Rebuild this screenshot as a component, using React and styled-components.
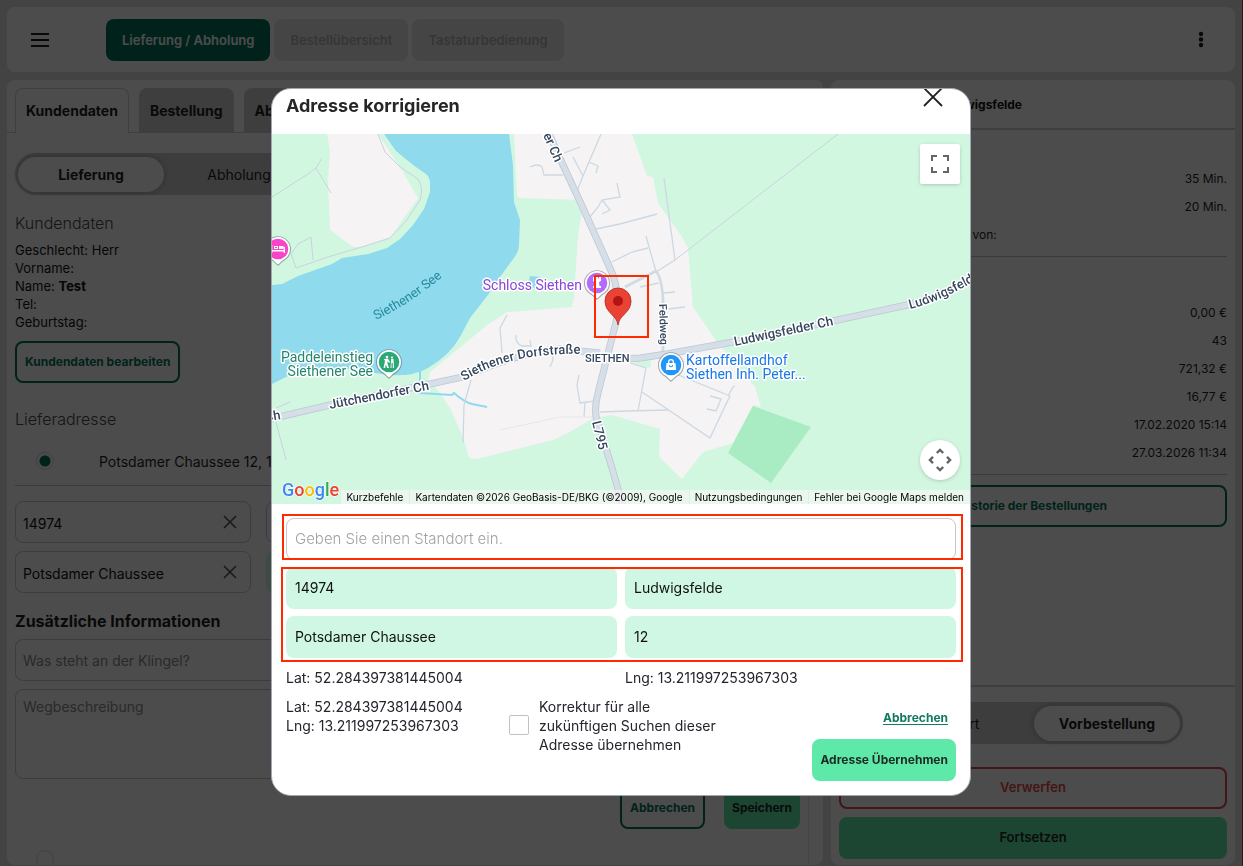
import React from "react";
import styled, { createGlobalStyle, css } from "styled-components";

const GlobalStyle = createGlobalStyle`
  *, *::before, *::after { box-sizing: border-box; }
  body {
    margin: 0;
    background: #dfdfdf;
    font-family: Inter, "Liberation Sans", sans-serif;
    font-size: 14px;
    color: #1f1f1f;
  }
  button, input, textarea { font-family: inherit; }
`;

/* ---------- page frame ---------- */

const Page = styled.div`
  height: 100vh;
  display: flex;
  flex-direction: column;
  gap: 8px;
  padding: 7px 7px 1px;
  border-right: 1px solid #656565;
  overflow: hidden;
`;

const TopBar = styled.header`
  flex: none;
  display: flex;
  align-items: center;
  height: 65px;
  padding: 0 24px;
  background: #fff;
  border-radius: 8px;
`;

const IconButton = styled.button`
  display: flex;
  padding: 0;
  border: 0;
  background: none;
  color: #1f1f1f;
`;

const StepNav = styled.nav`
  display: flex;
  gap: 4px;
  margin-left: 57px;
  flex: 1;
`;

const StepButton = styled.button`
  height: 42px;
  padding: 0 16px;
  border: 0;
  border-radius: 8px;
  font-size: 13px;
  font-weight: 600;
  background: ${(p) => (p.$active ? "#06745c" : "#e8e8e8")};
  color: ${(p) => (p.$active ? "#fff" : "#b4b4b4")};
`;

const Columns = styled.main`
  flex: 1;
  min-height: 0;
  display: grid;
  grid-template-columns: minmax(0, 1fr) 404px;
  gap: 8px;
`;

const Panel = styled.section`
  min-height: 0;
  display: flex;
  flex-direction: column;
  background: #fff;
  border-radius: 8px;
  overflow: hidden;
`;

/* ---------- customer form ---------- */

const TabRow = styled.div`
  flex: none;
  display: flex;
  align-items: flex-end;
  gap: 10px;
  padding: 8px 8px 0;
  height: 53px;
  box-shadow: inset 0 -1px 0 #cfcfcf;
`;

const Tab = styled.button`
  height: 45px;
  padding: 0 10px 2px;
  border: 1px solid ${(p) => (p.$active ? "#cfcfcf" : "#d0d0d0")};
  border-bottom: 0;
  border-radius: 8px 8px 0 0;
  background: ${(p) => (p.$active ? "#fff" : "#d0d0d0")};
  font-size: 14px;
  font-weight: 700;
  color: #1f1f1f;
`;

const FormArea = styled.div`
  flex: 1;
  display: flex;
  flex-direction: column;
  align-items: flex-start;
  margin-right: 14px;
  padding: 20px 8px 0;
  border-right: 1px solid #e4e4e4;
  overflow: hidden;
`;

const Toggle = styled.div`
  flex: none;
  display: flex;
  gap: 2px;
  width: 300px;
  height: 42px;
  padding: 4px 3px 3px;
  border-radius: 21px;
  background: #cccccc;
  ${(p) => p.$centered && css`align-self: center;`}
`;

const ToggleOption = styled.button`
  flex: 1;
  border: 0;
  border-radius: 18px;
  font-size: 14px;
  font-weight: ${(p) => (p.$active ? 700 : 400)};
  color: #1f1f1f;
  background: ${(p) => (p.$active ? "#fff" : "transparent")};
  box-shadow: ${(p) => (p.$active ? "0 0 6px rgba(0, 0, 0, 0.25)" : "none")};
`;

const SectionTitle = styled.h2`
  flex: none;
  margin: ${(p) => p.$top}px 0 0;
  font-size: 16px;
  line-height: 20px;
  font-weight: ${(p) => (p.$bold ? 700 : 300)};
  color: ${(p) => (p.$bold ? "#1f1f1f" : "#4a4a4a")};
`;

const CustomerFacts = styled.div`
  flex: none;
  margin: 8px 0 10px;
  font-size: 13px;
  line-height: 18px;
  color: #111;
`;

const OutlineButton = styled.button`
  flex: none;
  height: 42px;
  padding: 0 8px 2px;
  border: 2px solid ${(p) => (p.$danger ? "#e5484d" : "#06745c")};
  border-radius: 8px;
  background: transparent;
  font-size: ${(p) => (p.$danger ? 13 : 12)}px;
  font-weight: ${(p) => (p.$danger ? 600 : 700)};
  color: ${(p) => (p.$danger ? "#e5484d" : "#06745c")};
`;

const FilledButton = styled.button`
  flex: none;
  height: 42px;
  padding: 0 8px 2px;
  border: 0;
  border-radius: 8px;
  background: #5fe9a9;
  font-size: ${(p) => (p.$wide ? 13 : 12)}px;
  font-weight: ${(p) => (p.$wide ? 600 : 700)};
  color: #1f2a26;
`;

const AddressChoice = styled.label`
  flex: none;
  display: flex;
  align-items: center;
  height: 48px;
  margin-top: 8px;
  padding-left: 21px;
  gap: 45px;
  white-space: nowrap;
  font-size: 14px;
`;

const Radio = styled.input`
  appearance: none;
  flex: none;
  width: 18px;
  height: 18px;
  margin: 0;
  border: 1px solid #d8d8d8;
  border-radius: 50%;
  background: #fff;
  &:checked {
    background: radial-gradient(circle, #06745c 5px, #fff 6px);
  }
`;

const Rule = styled.hr`
  flex: none;
  align-self: stretch;
  height: 1px;
  margin: ${(p) => p.$margin || "0"};
  border: 0;
  background: #c4c4c4;
`;

const FieldGrid = styled.div`
  flex: none;
  align-self: stretch;
  display: grid;
  grid-template-columns: 236px 1fr;
  gap: 8px 15px;
`;

const FieldShell = styled.div`
  display: flex;
  align-items: center;
  height: 42px;
  padding: 0 12px 0 7px;
  border: 1px solid ${(p) => (p.$filled ? "#cff7e3" : "#c8c8c8")};
  border-radius: 8px;
  background: ${(p) => (p.$filled ? "#cff7e3" : "#fff")};
`;

const BareInput = styled.input`
  flex: 1;
  min-width: 0;
  padding: 3px 0 0;
  border: 0;
  background: none;
  font-size: 14px;
  color: #111;
`;

const fieldBox = css`
  flex: none;
  align-self: stretch;
  border: 1px solid #c8c8c8;
  border-radius: 8px;
  background: #fff;
  font-size: 14px;
  color: #111;
  &::placeholder { color: #8e8e8e; opacity: 1; }
`;

const TextField = styled.input`
  ${fieldBox}
  height: 42px;
  margin-top: 8px;
  padding: 0 7px;
`;

const TextArea = styled.textarea`
  ${fieldBox}
  height: 90px;
  margin-top: 8px;
  padding: 8px 7px;
  resize: none;
`;

const FormActions = styled.div`
  flex: none;
  align-self: stretch;
  display: flex;
  justify-content: flex-end;
  gap: 19px;
  margin-top: 8px;
`;

const SpareChoice = styled.label`
  flex: none;
  padding: 21px 0 0 21px;
`;

/* ---------- order summary ---------- */

const SummaryHeader = styled.div`
  flex: none;
  display: flex;
  align-items: center;
  height: 50px;
  padding: 0 8px;
  border-bottom: 2px solid #cfcfcf;
  font-size: 12px;
  font-weight: 700;
  color: #111;
`;

const SummaryHeading = styled.span`
  width: 183px;
  text-align: right;
  white-space: nowrap;
`;

const SummaryBody = styled.div`
  flex: 1;
  display: flex;
  flex-direction: column;
  padding: 35px 8px 0;
`;

const FactList = styled.dl`
  margin: 0;
  font-size: 12px;
  line-height: 28px;
`;

const Fact = styled.div`
  display: flex;
  justify-content: space-between;
  dt, dd { margin: 0; }
`;

const SummaryFooter = styled.div`
  flex: none;
  display: flex;
  flex-direction: column;
  gap: 8px;
  padding: 15px 8px 6px;
  border-top: 2px solid #cfcfcf;
`;

const FooterGap = styled.div`
  height: 7px;
`;

/* ---------- dialog ---------- */

const Overlay = styled.div`
  position: fixed;
  inset: 0;
  display: flex;
  justify-content: center;
  align-items: flex-start;
  padding: 88px 1px 0 0;
  background: rgba(0, 0, 0, 0.7);
`;

const Dialog = styled.div`
  width: 700px;
  max-width: 100%;
  border: 1px solid #a3a5b3;
  border-radius: 20px;
  background: #fff;
  overflow: hidden;
`;

const DialogHeader = styled.header`
  display: flex;
  justify-content: space-between;
  align-items: flex-start;
  height: 45px;
  padding: 0 26px 0 14px;
`;

const DialogTitle = styled.h1`
  margin: 6px 0 0;
  font-size: 18px;
  line-height: 22px;
  font-weight: 700;
  color: #262626;
`;

const MapFrame = styled.div`
  position: relative;
  height: 370px;
  overflow: hidden;
`;

const MapSvg = styled.svg`
  display: block;
  width: 100%;
  height: 100%;
  font-family: Roboto, sans-serif;
`;

const MapControl = styled.button`
  position: absolute;
  right: 10px;
  ${(p) => (p.$bottom ? "bottom: 24px;" : "top: 10px;")}
  display: flex;
  align-items: center;
  justify-content: center;
  width: 40px;
  height: 40px;
  padding: 0;
  border: 0;
  border-radius: ${(p) => (p.$bottom ? "50%" : "2px")};
  background: #fff;
  box-shadow: 0 1px 4px -1px rgba(0, 0, 0, 0.3);
`;

const Attribution = styled.div`
  position: absolute;
  right: 0;
  bottom: 0;
  display: flex;
  gap: 1px;
  white-space: nowrap;
`;

const AttributionItem = styled.a`
  height: 14px;
  padding: 0 6px 0 5px;
  background: rgba(245, 245, 245, 0.7);
  font-size: 10px;
  line-height: 14px;
  color: #000;
  text-decoration: none;
`;

const DialogBody = styled.div`
  padding: 14px;
`;

const Marked = styled.div`
  position: relative;
`;

const RedFrame = styled.div`
  position: absolute;
  inset: ${(p) => p.$inset};
  border: 2px solid #ff2a00;
  pointer-events: none;
`;

const SearchInput = styled.input`
  display: block;
  width: 100%;
  height: 42px;
  padding: 0 8px 2px;
  border: 1px solid #c6c6c6;
  border-radius: 8px;
  font-size: 15px;
  font-weight: 300;
  &::placeholder { color: #a2a2a2; opacity: 1; }
`;

const AddressGrid = styled.div`
  display: grid;
  grid-template-columns: 1fr 1fr;
  gap: 7px 8px;
  margin-top: 7px;
`;

const AddressInput = styled.input`
  min-width: 0;
  height: 42px;
  padding: 0 9px 2px;
  border: 0;
  border-radius: 8px;
  background: #cff7e3;
  font-size: 14px;
  color: #111;
`;

const Coordinates = styled.div`
  display: grid;
  grid-template-columns: 1fr 1fr;
  gap: 8px;
  margin-top: 10px;
  line-height: 19px;
  color: #23252c;
`;

const DialogFooter = styled.footer`
  display: flex;
  align-items: flex-start;
  margin-top: 10px;
  line-height: 19px;
  color: #23252c;
`;

const FooterCoordinates = styled.div`
  width: 223px;
`;

const FutureOption = styled.label`
  display: flex;
  align-items: flex-start;
  gap: 10px;
  width: 214px;
`;

const CheckBox = styled.input`
  appearance: none;
  flex: none;
  width: 20px;
  height: 20px;
  margin: 18px 0 0;
  border: 1px solid #c2c2c2;
  border-radius: 2px;
  background: #fff;
`;

const DialogActions = styled.div`
  display: flex;
  flex-direction: column;
  align-items: flex-end;
  margin-left: auto;
`;

const LinkButton = styled.button`
  height: 42px;
  padding: 0 8px 2px;
  border: 0;
  background: none;
  font-size: 12px;
  font-weight: 700;
  text-decoration: underline;
  text-underline-offset: 2px;
  color: #117a62;
`;

/* ---------- icons ---------- */

const MenuIcon = () => (
  <svg width="18" height="16" viewBox="0 0 18 16" stroke="currentColor" strokeWidth="2" aria-hidden="true">
    <path d="M0 2h18M0 8h18M0 14h18" />
  </svg>
);

const DotsIcon = () => (
  <svg width="20" height="18" viewBox="0 0 20 18" fill="currentColor" aria-hidden="true">
    <circle cx="10" cy="3" r="2.2" />
    <circle cx="10" cy="8.5" r="2.2" />
    <circle cx="10" cy="14" r="2.2" />
  </svg>
);

const ClearIcon = () => (
  <svg width="16" height="16" viewBox="0 0 16 16" stroke="#555" strokeWidth="1.6" aria-hidden="true">
    <path d="M2 2l12 12M14 2L2 14" />
  </svg>
);

const CloseIcon = () => (
  <svg width="22" height="18" viewBox="0 0 22 18" stroke="#222" strokeWidth="1.8" fill="none" aria-hidden="true">
    <path d="M2 -1L20 17M20 -1L2 17" />
  </svg>
);

const FullscreenIcon = () => (
  <svg width="18" height="18" viewBox="0 0 18 18" fill="#666" aria-hidden="true">
    <path d="M0 0v6h2V2h4V0zM16 0h-4v2h4v4h2V0zM16 16h-4v2h6v-6h-2zM2 12H0v6h6v-2H2z" />
  </svg>
);

const MoveIcon = () => (
  <svg width="24" height="24" viewBox="0 0 24 24" fill="none" stroke="#666" strokeWidth="2.4" aria-hidden="true">
    <path d="M8.8 5L12 1.9L15.2 5M8.8 19L12 22.1L15.2 19M5 8.8L1.9 12L5 15.2M19 8.8L22.1 12L19 15.2" />
  </svg>
);

/* ---------- map ---------- */

const RoadLabel = styled.text`
  font-size: ${(p) => p.$size || 13}px;
  font-weight: 500;
  fill: #34465c;
  stroke: #fff;
  stroke-width: 3px;
  stroke-linejoin: round;
  paint-order: stroke;
`;

const PlaceLabel = styled.text`
  font-size: 14px;
  fill: ${(p) => p.$color};
  stroke: #fff;
  stroke-width: 3px;
  stroke-linejoin: round;
  paint-order: stroke;
`;

const Poi = ({ x, y, color, children }) => (
  <g transform={`translate(${x} ${y})`}>
    <path d="M0 17C-2 15.5-4 12.5-8.5 10A13 13 0 1 1 8.5 10C4 12.5 2 15.5 0 17Z" fill="#4d5a63" opacity="0.5" />
    <path d="M0 15.5C-2 14-4 11-8 9A12 12 0 1 1 8 9C4 11 2 14 0 15.5Z" fill="#fff" />
    <circle r="10.3" fill={color} />
    <g fill="#fff">{children}</g>
  </g>
);

const mainRoads = [
  "M543 120L563 165L583 208L613 275Q621 300 616 322L598 393Q593 412 598 423L612 468L624 510",
  "M266 420L330 405L430 384L463 377Q520 352 560 349L600 353",
  "M600 360L640 358L667 354L733 342L833 321L907 305Q942 296 980 274",
];

const minorRoads = [
  "M564 153L580 147M530 167Q538 163 542 167L544 175L563 175M573 157L583 176M601 134L583 176L577 191M589 162L598 166L596 173M590 217L598 207L602 200L620 197L617 183M602 200L610 210L602 214M596 229L620 224L657 214",
  "M612 262L632 252L648 248M646 236L656 272L675 260L664 178M663 293L675 292M668 309L685 307M640 287L659 283",
  "M507 315L500 328L502 353M516 335Q515 343 522 346L531 346L530 340M552 345L553 360L550 367M471 380L464 405L463 443M579 375L577 385L580 403L595 401M585 403L584 417M600 412L628 411L668 410",
  "M630 363L646 368L638 411M642 392L710 438L728 400L730 396L676 374M728 396L733 387L735 386M710 396L721 399L716 411L707 409",
];

const paths = [
  "M675 260L838 134",
  "M272 197L308 174L316 168L322 158M316 168L331 193",
  "M378 134L385 152L400 167L418 179Q424 188 420 200L407 220L390 238L365 246L328 257L296 268L291 254L298 244L311 237L313 260",
  "M276 422L286 460M276 408L290 402",
];

const TownMap = () => (
  <MapSvg viewBox="272 134 698 370" preserveAspectRatio="xMidYMid slice" role="img" aria-label="Karte von Siethen">
    <defs>
      <path id="lakeLine" d="M376 320Q414 302 450 270" />
      <path id="dorfLine" d="M464 381Q511 351 590 354" />
      <path id="eastLine" d="M910 309Q945 300 985 275" />
    </defs>
    <rect x="272" y="134" width="698" height="370" fill="#d2f7e1" />
    <g fill="#f5f3f4">
      <path d="M327 134L330 152L328 182L330 230L353 247L360 247L390 238L418 198L403 172L378 134Z" />
      <path d="M514 134L517 195Q518 198 521 198L584 200L578 235L574 298L572 307L523 311L507 312L487 325L457 350L430 372L428 380L438 390L450 408L463 437L469 458L477 459L553 440L570 432L593 418L612 415L660 429L659 457L682 479L703 452L733 443L753 405L761 407L755 387L738 367L717 342L693 307L688 248L682 237L658 203L653 177L647 176L632 134Z" />
    </g>
    <path d="M630 363L652 357L650 368Z" fill="#d2f7e1" />
    <path d="M753 406L811 427L771 483L728 453Z" fill="#a9ebc3" />
    <path
      d="M384 134L396 151L413 165L426 174Q430 178 430 183L430 192L424 209L413 225L400 239L387 248L368 254L342 258L332 264L298 276L282 284L272 285L272 384L300 370L340 368L389 375Q412 377 428 368Q450 355 460 337L470 318L488 295L500 277L516 255Q519 250 519 245L520 220L514 202L513 165L509 134ZM530 276L541 277L538 290L528 285Z"
      fill="#90daee"
    />
    <path d="M420 368V393L452 395L454 393Q464 402 472 404L487 407" fill="none" stroke="#90daee" strokeWidth="2" />
    <g fill="none" stroke="#cbd1df" strokeWidth="1">
      {paths.map((d) => <path key={d} d={d} />)}
    </g>
    <g fill="none" stroke="#ccd8e2" strokeWidth="1.3">
      {minorRoads.map((d) => <path key={d} d={d} />)}
    </g>
    <path d="M625 287L656 271Q662 278 663 300V352" fill="none" stroke="#d0dae3" strokeWidth="2.6" />
    <path d="M500 430L560 417L593 417" fill="none" stroke="#e6e6e8" strokeWidth="1" />
    <g fill="none" stroke="#bcc8d4" strokeWidth="7">
      {mainRoads.map((d) => <path key={d} d={d} />)}
    </g>
    <g fill="none" stroke="#d6dee7" strokeWidth="5.4">
      {mainRoads.map((d) => <path key={d} d={d} />)}
    </g>

    <text fontSize="13" fill="#258a9b"><textPath href="#lakeLine">Siethener See</textPath></text>
    <RoadLabel><textPath href="#dorfLine">Siethener Dorfstraße</textPath></RoadLabel>
    <RoadLabel><textPath href="#eastLine">Ludwigsfelder</textPath></RoadLabel>
    <RoadLabel transform="translate(330 409) rotate(-11)">Jütchendorfer Ch</RoadLabel>
    <RoadLabel transform="translate(281 419) rotate(-10)" textAnchor="end">Ch</RoadLabel>
    <RoadLabel transform="translate(555 163) rotate(67)" textAnchor="end">er Ch</RoadLabel>
    <RoadLabel transform="translate(735 346) rotate(-12)">Ludwigsfelder Ch</RoadLabel>
    <RoadLabel transform="translate(592 422) rotate(76)">L795</RoadLabel>
    <RoadLabel $size={11} transform="translate(659 304) rotate(88)">Feldweg</RoadLabel>
    <RoadLabel $size={11} x="585" y="362">SIETHEN</RoadLabel>
    <PlaceLabel $color="#8b46d8" x="582" y="290" textAnchor="end">Schloss Siethen</PlaceLabel>
    <PlaceLabel $color="#26876d" x="373" y="362" textAnchor="end">Paddeleinstieg</PlaceLabel>
    <PlaceLabel $color="#26876d" x="373" y="376" textAnchor="end">Siethener See</PlaceLabel>
    <PlaceLabel $color="#1a78ea" x="686" y="365">Kartoffellandhof</PlaceLabel>
    <PlaceLabel $color="#1a78ea" x="686" y="379">Siethen Inh. Peter...</PlaceLabel>

    <Poi x={389} y={362} color="#2aa876">
      <circle cx="-2" cy="-5" r="1.3" />
      <circle cx="3" cy="-4.5" r="1.1" />
      <path d="M-5-3L-1-3.5L1 0L0 1L-1.5-1V1.5L0 6H-2L-3 2.5L-4 6H-5.500L-4-1ZM2-3H4.5L5 6H3.8V1H2.5V6H1.5L2-1Z" />
    </Poi>
    <Poi x={671} y={365} color="#2196f8">
      <path fillRule="evenodd" d="M-3-2V-3A3 3 0 0 1 3-3V-2H4.5L5.2 5H-5.2L-4.5-2ZM-1.7-2H1.7V-3A1.7 1.7 0 0 0-1.7-3ZM-2.2 0A2.2 2.3 0 0 0 2.2 0H1.2A1.2 1.2 0 0 1-1.2 0Z" />
    </Poi>
    <Poi x={597} y={283} color="#b36bfb">
      <path d="M-4-6H-2V-4.500H-1V-6H1V-4.5H2V-6H4V-2L2-1L2.5 3H4V5H-4V3H-2.5L-2-1L-4-2Z" />
    </Poi>
    <Poi x={278} y={249} color="#f844c9">
      <path fillRule="evenodd" d="M-7-4H-5.7V1H5.7V-2H7V4H5.7V2.5H-5.7V4H-7ZM-4-3H0V0H-4ZM-3-2V-1H-1V-2ZM1-3H5Q6-3 6-1V0H1Z" />
    </Poi>

    <path d="M618 325C617 315 605 313 605 301A13 13 0 0 1 631 301C631 313 619 315 618 325Z" fill="#ea4335" stroke="#b3261e" strokeWidth="0.8" />
    <circle cx="618" cy="301" r="5" fill="#b31412" />
    <rect x="595" y="276" width="53" height="61" fill="none" stroke="#ff2a00" strokeWidth="2" />

    <text x="282" y="496" fontSize="18" fontWeight="500" stroke="#fff" strokeWidth="1" paintOrder="stroke" aria-label="Google">
      <tspan fill="#4285f4">G</tspan>
      <tspan fill="#ea4335">o</tspan>
      <tspan fill="#fbbc04">o</tspan>
      <tspan fill="#4285f4">g</tspan>
      <tspan fill="#34a853">l</tspan>
      <tspan fill="#ea4335">e</tspan>
    </text>
  </MapSvg>
);

/* ---------- data ---------- */

const timing = [
  ["Lieferzeit", "35 Min."],
  ["Abholzeit", "20 Min."],
  ["Bestellung entnommen von:", ""],
];

const history = [
  ["Guthaben", "0,00 €"],
  ["Anzahl Bestellungen", "43"],
  ["Gesamtumsatz", "721,32 €"],
  ["Durchschnitt", "16,77 €"],
  ["Erste Bestellung", "17.02.2020 15:14"],
  ["Letzte Bestellung", "27.03.2026 11:34"],
];

const Facts = ({ rows }) => (
  <FactList>
    {rows.map(([name, value]) => (
      <Fact key={name}>
        <dt>{name}</dt>
        <dd>{value}</dd>
      </Fact>
    ))}
  </FactList>
);

const ClearableField = ({ label, value, filled }) => (
  <FieldShell $filled={filled}>
    <BareInput aria-label={label} defaultValue={value} />
    <IconButton type="button" aria-label={`${label} leeren`}><ClearIcon /></IconButton>
  </FieldShell>
);

const CustomerPanel = () => (
  <Panel>
    <TabRow>
      <Tab $active>Kundendaten</Tab>
      <Tab>Bestellung</Tab>
      <Tab>Abschluss</Tab>
    </TabRow>
    <FormArea>
      <Toggle>
        <ToggleOption $active>Lieferung</ToggleOption>
        <ToggleOption>Abholung</ToggleOption>
      </Toggle>
      <SectionTitle $top={18}>Kundendaten</SectionTitle>
      <CustomerFacts>
        <div>Geschlecht: Herr</div>
        <div>Vorname:</div>
        <div>Name: <strong>Test</strong></div>
        <div>Tel:</div>
        <div>Geburtstag:</div>
      </CustomerFacts>
      <OutlineButton>Kundendaten bearbeiten</OutlineButton>
      <SectionTitle $top={26}>Lieferadresse</SectionTitle>
      <AddressChoice>
        <Radio type="radio" name="address" defaultChecked />
        Potsdamer Chaussee 12, 14974 Ludwigsfelde
      </AddressChoice>
      <Rule $margin="0 0 15px" />
      <FieldGrid>
        <ClearableField label="Postleitzahl" value="14974" />
        <ClearableField label="Ort" value="Ludwigsfelde" />
        <ClearableField label="Straße" value="Potsdamer Chaussee" />
        <ClearableField label="Hausnummer" value="12" filled />
      </FieldGrid>
      <SectionTitle $top={18} $bold>Zusätzliche Informationen</SectionTitle>
      <TextField aria-label="Klingel" placeholder="Was steht an der Klingel?" />
      <TextArea aria-label="Wegbeschreibung" placeholder="Wegbeschreibung" />
      <FormActions>
        <OutlineButton>Abbrechen</OutlineButton>
        <FilledButton>Speichern</FilledButton>
      </FormActions>
      <SpareChoice><Radio type="radio" name="address" aria-label="Neue Adresse" /></SpareChoice>
    </FormArea>
  </Panel>
);

const SummaryPanel = () => (
  <Panel>
    <SummaryHeader>
      <SummaryHeading>Test, 14974 Ludwigsfelde</SummaryHeading>
    </SummaryHeader>
    <SummaryBody>
      <Facts rows={timing} />
      <Rule $margin="7px 0 42px" />
      <Facts rows={history} />
      <Rule $margin="7px 0 10px" />
      <OutlineButton>Historie der Bestellungen</OutlineButton>
    </SummaryBody>
    <SummaryFooter>
      <Toggle $centered>
        <ToggleOption>Sofort</ToggleOption>
        <ToggleOption $active>Vorbestellung</ToggleOption>
      </Toggle>
      <FooterGap />
      <OutlineButton $danger>Verwerfen</OutlineButton>
      <FilledButton $wide>Fortsetzen</FilledButton>
    </SummaryFooter>
  </Panel>
);

const AddressDialog = () => (
  <Dialog role="dialog" aria-modal="true" aria-labelledby="dialogTitle">
    <DialogHeader>
      <DialogTitle id="dialogTitle">Adresse korrigieren</DialogTitle>
      <IconButton type="button" aria-label="Schließen"><CloseIcon /></IconButton>
    </DialogHeader>
    <MapFrame>
      <TownMap />
      <MapControl type="button" aria-label="Vollbild"><FullscreenIcon /></MapControl>
      <MapControl type="button" $bottom aria-label="Kartenausschnitt bewegen"><MoveIcon /></MapControl>
      <Attribution>
        <AttributionItem href="#kurzbefehle">Kurzbefehle</AttributionItem>
        <AttributionItem href="#daten">Kartendaten ©2026 GeoBasis-DE/BKG (©2009), Google</AttributionItem>
        <AttributionItem href="#nutzung">Nutzungsbedingungen</AttributionItem>
        <AttributionItem href="#fehler">Fehler bei Google Maps melden</AttributionItem>
      </Attribution>
    </MapFrame>
    <DialogBody>
      <Marked>
        <SearchInput aria-label="Standort" placeholder="Geben Sie einen Standort ein." />
        <RedFrame $inset="-4px -7px 0 -4px" />
      </Marked>
      <Marked>
        <AddressGrid>
          <AddressInput aria-label="Postleitzahl" defaultValue="14974" />
          <AddressInput aria-label="Ort" defaultValue="Ludwigsfelde" />
          <AddressInput aria-label="Straße" defaultValue="Potsdamer Chaussee" />
          <AddressInput aria-label="Hausnummer" defaultValue="12" />
        </AddressGrid>
        <RedFrame $inset="0 -7px -4px -5px" />
      </Marked>
      <Coordinates>
        <span>Lat: 52.284397381445004</span>
        <span>Lng: 13.211997253967303</span>
      </Coordinates>
      <DialogFooter>
        <FooterCoordinates>
          <div>Lat: 52.284397381445004</div>
          <div>Lng: 13.211997253967303</div>
        </FooterCoordinates>
        <FutureOption>
          <CheckBox type="checkbox" />
          <span>Korrektur für alle zukünftigen Suchen dieser Adresse übernehmen</span>
        </FutureOption>
        <DialogActions>
          <LinkButton type="button">Abbrechen</LinkButton>
          <FilledButton type="button">Adresse Übernehmen</FilledButton>
        </DialogActions>
      </DialogFooter>
    </DialogBody>
  </Dialog>
);

export default function App() {
  return (
    <>
      <GlobalStyle />
      <Page>
        <TopBar>
          <IconButton aria-label="Menü"><MenuIcon /></IconButton>
          <StepNav>
            <StepButton $active>Lieferung / Abholung</StepButton>
            <StepButton>Bestellübersicht</StepButton>
            <StepButton>Tastaturbedienung</StepButton>
          </StepNav>
          <IconButton aria-label="Weitere Optionen"><DotsIcon /></IconButton>
        </TopBar>
        <Columns>
          <CustomerPanel />
          <SummaryPanel />
        </Columns>
      </Page>
      <Overlay>
        <AddressDialog />
      </Overlay>
    </>
  );
}
